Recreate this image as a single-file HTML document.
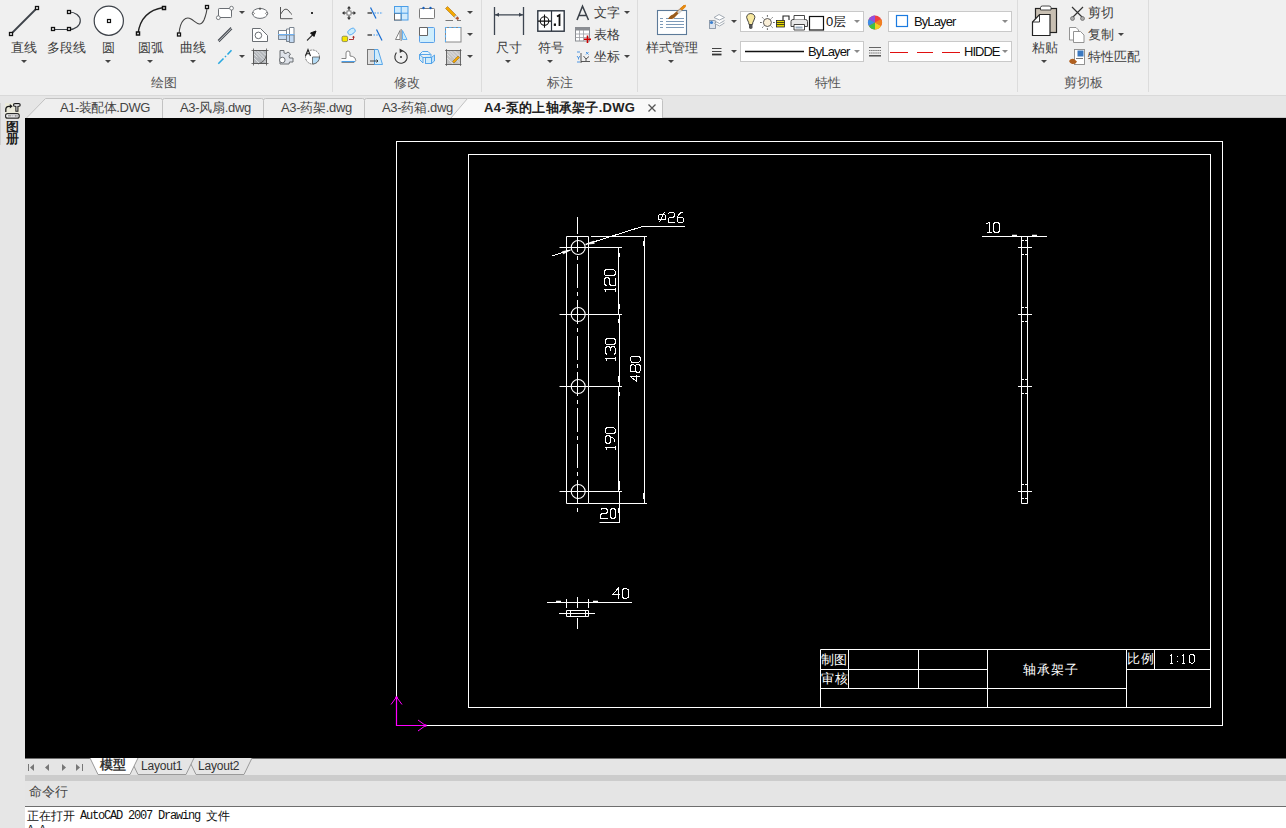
<!DOCTYPE html>
<html><head><meta charset="utf-8">
<style>
*{margin:0;padding:0;box-sizing:border-box}
html,body{width:1286px;height:828px;overflow:hidden;background:#e5e5e5;font-family:"Liberation Sans",sans-serif;position:relative}
.a{position:absolute}
.t{position:absolute;font-size:13px;line-height:13px;color:#3c3c3c;white-space:nowrap}
.lbl{position:absolute;font-size:13px;line-height:13px;color:#555;white-space:nowrap}
.sep{position:absolute;top:0;width:1px;height:92px;background:#dcdcdc}
.dd{position:absolute;width:0;height:0;border-left:3px solid transparent;border-right:3px solid transparent;border-top:3px solid #444}
.ddg{position:absolute;width:0;height:0;border-left:3.5px solid transparent;border-right:3.5px solid transparent;border-top:3.5px solid #8a8a8a}
svg{position:absolute;overflow:visible}
.tab{letter-spacing:-0.3px;color:#444}
.combo{position:absolute;background:#fff;border:1px solid #c9c9c9}
</style></head><body>
<!-- RIBBON -->
<div class="a" style="left:0;top:0;width:1286px;height:95px;background:#f0f0f0"></div>
<div class="a" style="left:0;top:95px;width:1286px;height:1px;background:#d9d9d9"></div>
<div class="sep" style="left:332px"></div>
<div class="sep" style="left:481px"></div>
<div class="sep" style="left:637px"></div>
<div class="sep" style="left:1017px"></div>
<div class="sep" style="left:1148px"></div>

<div class="lbl" style="left:151px;top:76px">绘图</div>
<div class="lbl" style="left:394px;top:76px">修改</div>
<div class="lbl" style="left:547px;top:76px">标注</div>
<div class="lbl" style="left:815px;top:76px">特性</div>
<div class="lbl" style="left:1064px;top:76px">剪切板</div>

<div class="t" style="left:11px;top:41px">直线</div>
<div class="t" style="left:47px;top:41px">多段线</div>
<div class="t" style="left:102px;top:41px">圆</div>
<div class="t" style="left:138px;top:41px">圆弧</div>
<div class="t" style="left:180px;top:41px">曲线</div>
<div class="t" style="left:496px;top:41px">尺寸</div>
<div class="t" style="left:538px;top:41px">符号</div>
<div class="t" style="left:594px;top:6px">文字</div>
<div class="t" style="left:594px;top:28px">表格</div>
<div class="t" style="left:594px;top:50px">坐标</div>
<div class="t" style="left:646px;top:41px">样式管理</div>
<div class="t" style="left:1032px;top:41px">粘贴</div>
<div class="t" style="left:1088px;top:6px">剪切</div>
<div class="t" style="left:1088px;top:28px">复制</div>
<div class="t" style="left:1088px;top:50px">特性匹配</div>

<div class="dd" style="left:21px;top:60px"></div>
<div class="dd" style="left:105px;top:60px"></div>
<div class="dd" style="left:147px;top:60px"></div>
<div class="dd" style="left:190px;top:60px"></div>
<div class="dd" style="left:505px;top:60px"></div>
<div class="dd" style="left:547px;top:60px"></div>
<div class="dd" style="left:668px;top:60px"></div>
<div class="dd" style="left:1041px;top:60px"></div>
<div class="dd" style="left:239px;top:11px"></div>
<div class="dd" style="left:239px;top:55px"></div>
<div class="dd" style="left:467px;top:11px"></div>
<div class="dd" style="left:467px;top:33px"></div>
<div class="dd" style="left:467px;top:55px"></div>
<div class="dd" style="left:624px;top:11px"></div>
<div class="dd" style="left:624px;top:55px"></div>
<div class="dd" style="left:731px;top:20px"></div>
<div class="dd" style="left:731px;top:50px"></div>
<div class="dd" style="left:1118px;top:33px"></div>

<!-- combos -->
<div class="combo" style="left:740px;top:11px;width:124px;height:21px"></div>
<div class="combo" style="left:740px;top:41px;width:124px;height:21px"></div>
<div class="combo" style="left:888px;top:11px;width:124px;height:21px"></div>
<div class="combo" style="left:888px;top:41px;width:124px;height:21px"></div>
<div class="t" style="left:826px;top:15px;color:#111">0层</div>
<div class="t" style="left:808px;top:45px;color:#111;letter-spacing:-0.9px">ByLayer</div>
<div class="t" style="left:914px;top:15px;color:#111;letter-spacing:-0.9px">ByLayer</div>
<div class="t" style="left:964px;top:45px;color:#111;letter-spacing:-1px">HIDDE</div>
<div class="ddg" style="left:854px;top:20px"></div>
<div class="ddg" style="left:854px;top:50px"></div>
<div class="ddg" style="left:1002px;top:20px"></div>
<div class="ddg" style="left:1002px;top:50px"></div>


<!-- RIBBON ICONS -->
<svg class="a" style="left:0;top:0" width="1286" height="96" viewBox="0 0 1286 96">
<g fill="none" stroke="#3d4249">
 <!-- line -->
 <line x1="11" y1="34" x2="37" y2="8" stroke-width="1.8"/>
 <rect x="9.5" y="32.5" width="3" height="3" fill="#fff" stroke="#111" stroke-width="1.3"/>
 <rect x="35.5" y="6.5" width="3" height="3" fill="#fff" stroke="#111" stroke-width="1.3"/>
 <!-- polyline -->
 <path d="M53 29.5 H69 M69 12 A11.3 8.75 0 0 1 69 29.5" stroke-width="1.2"/>
 <rect x="51.5" y="27.5" width="3" height="3" fill="#fff" stroke="#111" stroke-width="1.3"/>
 <rect x="67.5" y="27.5" width="3" height="3" fill="#fff" stroke="#111" stroke-width="1.3"/>
 <rect x="67.5" y="10.5" width="3" height="3" fill="#fff" stroke="#111" stroke-width="1.3"/>
 <!-- circle -->
 <circle cx="108.8" cy="20.7" r="14.6" fill="#fff" stroke-width="1.2"/>
 <rect x="107.5" y="19.5" width="3" height="3" fill="#fff" stroke="#111" stroke-width="1.2"/>
 <!-- arc -->
 <path d="M138 33.5 Q141 11 163.5 7.5" stroke-width="1.3" stroke="#222"/>
 <rect x="136.5" y="32" width="3" height="3" fill="#fff" stroke="#111" stroke-width="1.5"/>
 <rect x="162.5" y="6.5" width="3" height="3" fill="#fff" stroke="#111" stroke-width="1.5"/>
 <!-- spline -->
 <path d="M179 34 C180 20 186 16 191 19 C196 22 200 28 204 20 C206 15 207 10 207 7" stroke-width="1.1" stroke="#444"/>
 <rect x="177.5" y="33" width="3" height="3" fill="#fff" stroke="#111" stroke-width="1.3"/>
 <rect x="205.5" y="5.5" width="3" height="3" fill="#fff" stroke="#111" stroke-width="1.3"/>
 <!-- small draw icons -->
 <rect x="218.5" y="8.5" width="13" height="9" fill="#fff" stroke="#6a6e73" rx="0.8"/>
 <circle cx="231.5" cy="8.2" r="1.9" fill="#fff" stroke="#6a6e73" stroke-width="0.9"/>
 <circle cx="218.3" cy="17.7" r="1.9" fill="#fff" stroke="#6a6e73" stroke-width="0.9"/>
 <ellipse cx="260" cy="13.4" rx="7.6" ry="5" fill="#fff" stroke="#6a6e73"/>
 <rect x="259" y="7.8" width="2" height="1.8" fill="#555" stroke="none"/>
 <path d="M252.3 13.4 L253.4 12.3 L254.5 13.4 L253.4 14.5 Z M265.5 13.4 L266.6 12.3 L267.7 13.4 L266.6 14.5 Z" fill="#fff" stroke="#555" stroke-width="0.7"/>
 <path d="M280.5 7 V18.7 H292.5 M280.8 14 Q285 6 289 11 Q290.5 13.5 292 14.5" stroke="#555" stroke-width="1"/>
 <rect x="311" y="12" width="2" height="2" fill="#333" stroke="none"/>
 <path d="M218 40.5 L231 27.5 M219 41.8 L232 28.8" stroke="#4a4f56" stroke-width="1.1"/>
 <path d="M252.5 28.5 H260.5 L267.5 35.5 V41.5 H252.5 Z" fill="#fff" stroke="#6a6e73" stroke-linejoin="round"/>
 <circle cx="258.4" cy="35.4" r="3.3" stroke="#6a6e73"/>
 <path d="M278.5 30.5 H286.5 V39.5 H278.5 Z" fill="#fff" stroke="#7b8591"/>
 <path d="M278.5 35 H286.5 V39.5 H278.5 Z" fill="#c3daf3" stroke="#7b8591"/>
 <path d="M286.5 29 H289.5 V41.5 H286.5 Z M289.5 27.5 H294 V42.5 H289.5 Z" fill="#fff" stroke="#7b8591"/>
 <path d="M286.5 35 H289.5 V41.5 H286.5 Z M289.5 35 H294 V42.5 H289.5 Z" fill="#c3daf3" stroke="#7b8591"/>
 <line x1="278" y1="34.5" x2="294.5" y2="34.5" stroke="#6fb0f0"/>
 <line x1="307" y1="40.5" x2="313" y2="34.5" stroke="#333" stroke-width="1.1"/>
 <path d="M316 31 L310.5 33 L314 36.5 Z" fill="#111" stroke="#111"/>
 <path d="M218.3 63.7 L223.5 58.5 M225 57 L226 56 M227.5 54.5 L231.5 50.2" stroke="#29a8e0" stroke-width="1.6"/>
 <rect x="253.5" y="50.5" width="13" height="13" fill="#b3b6ba" stroke="#666"/>
 <path d="M254 54 L257.5 57.5 M254 58 L259.5 63.5 M257 50.5 L266 59.5 M261 50.5 L266 55.5 M254 50.5 L266 62.5" stroke="#e2e4e6" stroke-width="0.9"/>
 <path d="M258 64 Q265 62 266.5 55" stroke="#555" stroke-width="0.9"/>
 <path d="M251.5 50.5 H268.5 M251.5 63.5 H268.5 M253.5 48.5 V65.5 M266.5 48.5 V65.5" stroke="#555" stroke-width="0.8"/>
 <path d="M280 50.5 H284 V53 L286 53.5 L288 52 L290.5 54 L289 56 L289.5 58 H293 V62 H289.5 L289 64 H280 Z" fill="#dfe3ea" stroke="#6a6e73" stroke-width="1"/>
 <circle cx="282.3" cy="60" r="2.8" fill="#fff" stroke="#6a6e73"/>
 <circle cx="312.5" cy="57" r="7" fill="#fff" stroke="#555" stroke-dasharray="2 1" stroke-width="0.8"/>
 <path d="M312.5 57 H319.5 A7 7 0 0 1 312.5 64 Z" fill="#b5dcf5" stroke="#555" stroke-width="0.8"/>
 <path d="M305.5 56 L308 49.5 L310.5 56 M306.5 53.8 H309.5" stroke="#222" stroke-width="1.1"/>
</g>
<g fill="none">
 <!-- modify panel -->
 <rect x="347" y="11" width="4" height="4" fill="#fff" stroke="#666" stroke-width="0.8"/>
 <path d="M342 13 L344.5 11 V15 Z M356 13 L353.5 11 V15 Z M349 6 L347 8.5 H351 Z M349 20 L347 17.5 H351 Z" fill="#333"/>
 <path d="M344 13 H346.5 M351.5 13 H354 M349 8 V10.5 M349 15.5 V18" stroke="#333" stroke-width="1.2"/>
 <path d="M367.5 13 H372" stroke="#666" stroke-width="1.8"/>
 <path d="M370.5 7.5 L376 18.5" stroke="#1c6fd1" stroke-width="1.2"/>
 <path d="M374.5 13 H383" stroke="#6aaef0" stroke-width="1.5" stroke-dasharray="1.4 1.4"/>
 <rect x="394.5" y="6.5" width="13.5" height="13.5" fill="#cfeafc" stroke="#4a9ee8"/>
 <rect x="394.5" y="13.5" width="6.7" height="6.5" fill="#fff" stroke="#666"/>
 <path d="M401.2 6.5 V20 M394.5 13.2 H408" stroke="#4a9ee8"/>
 <rect x="419.5" y="8.5" width="15" height="10" fill="#fff" stroke="#7a7a7a" rx="0.8"/>
 <circle cx="423.5" cy="8" r="1.2" fill="#1560c0"/><circle cx="430.5" cy="8" r="1.2" fill="#1560c0"/>
 <path d="M445.5 8.5 L447.5 6.5 L456 15 L454 17 Z" fill="#f5a800" stroke="#a87010" stroke-width="0.6"/>
 <path d="M454 17 L456 15 L457.5 16.5 L455.5 18.5 Z" fill="#dedede" stroke="#999" stroke-width="0.5"/>
 <path d="M455.5 18.5 L457.5 16.5 L459 18 Q459 19.5 457.5 20 Z" fill="#b5522a"/>
 <path d="M445.5 20.5 H453 M457 20.5 H461" stroke="#777" stroke-width="1"/>
 <rect x="342" y="36.2" width="5.6" height="5.4" rx="1.4" fill="#f5e500" stroke="#6a6a40" stroke-width="0.7"/>
 <rect x="347.5" y="29" width="8" height="5" rx="2.5" transform="rotate(-35 351.5 31.5)" fill="#c9ecfc" stroke="#5aaaf0" stroke-width="0.9"/>
 <path d="M349 39.5 H353.5 V37" stroke="#a02020" stroke-width="0.9"/>
 <path d="M352 37.5 L353.5 35.8 L355 37.5 Z" fill="#a02020"/>
 <path d="M367.5 35 H372" stroke="#666" stroke-width="1.8"/>
 <path d="M373.5 35 H378" stroke="#6aaef0" stroke-width="1.5" stroke-dasharray="1.4 1.4"/>
 <path d="M376.5 29.5 L382 40.5" stroke="#1c6fd1" stroke-width="1.2"/>
 <path d="M400 30.5 L395.5 39.5 H400 Z" fill="#fff" stroke="#777" stroke-width="0.9"/>
 <path d="M402.5 30.5 L407 39.5 H402.5 Z" fill="#c9ecfc" stroke="#5aaaf0" stroke-width="0.9"/>
 <path d="M401.2 29 V41" stroke="#aaa" stroke-width="1.6"/>
 <rect x="419.5" y="27.5" width="15" height="15" fill="#cfeefd" stroke="#5aa0e8" rx="1"/>
 <path d="M419.5 35.5 V27.5 H427.5 V35.5 Z" fill="#fff" stroke="#666"/>
 <rect x="445.5" y="27.5" width="15.5" height="14.5" fill="#fff" stroke="#888"/>
 <path d="M445.5 42 V27.5 H461" stroke="#5ab0f5" stroke-dasharray="2.5 2" stroke-width="1.1"/>
 <path d="M341.5 58.5 H346 V53 Q346 51 348 51 Q350 51 350 53 V56 Q353 56 355 58 Q357 61 354 62.5 H341.5" fill="#fff" stroke="#777" stroke-width="0.9"/>
 <path d="M341.5 61.5 H355" stroke="#4a9ee8" stroke-width="1.1"/>
 <rect x="367.5" y="49.5" width="7" height="15" fill="#e0e0e0" stroke="#777"/>
 <path d="M374.5 49.5 H378 L382.5 64.5 H374.5 Z" fill="#d0ecfc" stroke="#4a9ee8" stroke-width="0.9"/>
 <path d="M370 61 H378 M376.5 59.5 L378 61 L376.5 62.5" stroke="#333" stroke-width="0.9"/>
 <circle cx="401" cy="57" r="6.2" stroke="#333" stroke-width="1.1" stroke-dasharray="30 6" transform="rotate(-60 401 57)"/>
 <path d="M399.5 48.5 L403.5 50.8 L399.8 53 Z" fill="#333"/>
 <circle cx="401" cy="57" r="1" fill="#333"/>
 <path d="M419.5 54.5 L422.5 51.5 H428 L431 54.5 Z" fill="#e6f5fd" stroke="#4a9ee8" stroke-width="0.9"/>
 <path d="M419.5 54.5 V59.5 L423 63 V57.5 Z M423 57.5 H431 V54.5" fill="#d0ecfc" stroke="#4a9ee8" stroke-width="0.9"/>
 <rect x="425.5" y="57.5" width="6" height="6" fill="#d0ecfc" stroke="#4a9ee8" stroke-width="0.9"/>
 <path d="M431.5 57.5 L434.5 55 V61 L431.5 63.5 Z" fill="#c0e2fa" stroke="#4a9ee8" stroke-width="0.9"/>
 <rect x="446.5" y="50.5" width="14" height="14" fill="#c4c4c4" stroke="#666" stroke-width="0.6"/>
 <path d="M447 54 L450.5 57.5 M447 58 L453 64 M450 50.5 L460 60.5 M454 50.5 L460 56.5 M447 50.5 L460 63.5" stroke="#e8e8e8" stroke-width="0.8"/>
 <path d="M452.5 61.5 L458 56 L459.5 57.5 L454 63 Z" fill="#f5a800" stroke="#8a6010" stroke-width="0.5"/>
 <path d="M445 50.5 H461.5 M445 64.5 H461.5 M446.5 49 V66 M460.5 49 V66" stroke="#555" stroke-width="0.7"/>
 <!-- annotate panel -->
 <path d="M494.5 7 V35 M523.5 7 V35 M495 14.8 H523" stroke="#3d4550" stroke-width="1.3"/>
 <path d="M495 14.8 L499 12.8 V16.8 Z M523 14.8 L519 12.8 V16.8 Z" fill="#3d4550"/>
 <rect x="537.8" y="10.8" width="26.4" height="20.4" fill="#fff" stroke="#2d3540" stroke-width="1.4"/>
 <path d="M551.5 10.8 V31.2" stroke="#2d3540" stroke-width="1.2"/>
 <circle cx="544.5" cy="21.1" r="4.3" stroke="#111" stroke-width="1.1"/>
 <path d="M538 21.1 H551 M544.5 14.5 V27.8" stroke="#111" stroke-width="1.1"/>
 <rect x="553.8" y="23.5" width="2.2" height="2.4" fill="#111"/>
 <path d="M557 16.5 L559.5 15 V26" stroke="#111" stroke-width="1.8"/>
 <path d="M577 20 L582.5 6.2 L588.5 20 M579 15.5 H586.5" stroke="#3a4048" stroke-width="1.5"/>
 <rect x="575.5" y="27.5" width="14" height="13.5" fill="#fff" stroke="#8a8d92"/>
 <rect x="575.5" y="27.5" width="14" height="3" fill="#8a8d92"/>
 <path d="M575.5 34 H589.5 M575.5 37.5 H589.5 M579.5 30 V41 M583.5 30 V41" stroke="#9a9da2" stroke-width="0.8"/>
 <path d="M587.5 35.5 V43 M584 39.3 H591" stroke="#c00" stroke-width="1.6"/>
 <path d="M581 53 V63 M581 61.5 H590 M583.5 56 L586 59 L589 56.5 M586 59 V61" stroke="#444" stroke-width="0.9"/>
 <path d="M577 52 H580 M586 52 L588.5 54.5 M588.5 52 L586 54.5 M577 56 L578.5 58 L580 56 M578.5 58 V59.5 M577 62 H580" stroke="#3a8be0" stroke-width="0.9"/>
 <!-- properties panel -->
 <rect x="657.5" y="10.5" width="29" height="24" fill="#fff" stroke="#5c7a99" stroke-width="1.1"/>
 <path d="M660 18.5 H663 M660 21.5 H663 M660 24.5 H663 M660 27.5 H663 M666 21.5 H684 M666 24.5 H684 M666 27.5 H684 M666 18.5 H670 M674 18.5 H684" stroke="#6e8fb0" stroke-width="0.9"/>
 <path d="M668 19 Q670 15 673 14.5 L684 5 Q686 4.5 685.5 6.5 L675.5 16.5 Q674 19.5 668 19 Z" fill="#9a5c1c"/>
 <path d="M684 5 L686 4.8 L685.6 7 L682 10.5 L680 8.5 Z" fill="#e88a10"/>
 <path d="M677 12 L680 9 L682 11 L679 14 Z" fill="#d0d0d0"/>
 <rect x="709.5" y="20.5" width="6" height="8" fill="#dde4ee" stroke="#8895a5" stroke-width="0.9"/>
 <circle cx="711.5" cy="22.5" r="1.6" fill="#3a7fd0"/>
 <path d="M714 17.5 L719 14.5 L724.5 17.5 L719.5 20 Z M714 20.5 L719.5 23.5 L724.5 20.5 M714 23 L719.5 26 L724.5 23" fill="#fff" stroke="#9aa3ad" stroke-width="0.9"/>
 <path d="M712 48.5 H721.5 M712 51.5 H721.5" stroke="#444" stroke-width="1.1"/>
 <path d="M712 54.5 H721.5" stroke="#333" stroke-width="1.8"/>
 <path d="M747.5 20 Q746 17 747 15.5 Q748.5 13.5 750.8 13.5 Q753 13.5 754.5 15.5 Q755.5 17 754 20 Q752.5 22.5 752.5 24.5 H749 Q749 22.5 747.5 20 Z" fill="#f8e9a0" stroke="#333" stroke-width="0.9"/>
 <path d="M749 25 H752.5 V28 Q750.8 30 749 28 Z" fill="#555"/>
 <circle cx="767.4" cy="22.5" r="4" fill="#fbf0d8" stroke="#444" stroke-width="0.9"/>
 <path d="M767.4 15 V16.8 M767.4 28.2 V30 M760 22.5 H761.8 M773 22.5 H774.8 M762.2 17.3 L763.4 18.5 M771.4 26.5 L772.6 27.7 M762.2 27.7 L763.4 26.5 M771.4 18.5 L772.6 17.3" stroke="#555" stroke-width="0.9"/>
 <rect x="776.5" y="20.5" width="8" height="6.5" fill="#e5d800" stroke="#222" stroke-width="0.8"/>
 <path d="M776.5 22.5 H784.5 M776.5 24.5 H784.5" stroke="#222" stroke-width="0.8"/>
 <path d="M783 20.5 V16 H789 V20" stroke="#222" stroke-width="1.1"/>
 <path d="M793 19.5 H805.5 Q807.5 19.5 807.5 21.5 V26.5 H791 V21.5 Q791 19.5 793 19.5 Z" fill="#e8e8e8" stroke="#333" stroke-width="0.9"/>
 <path d="M794 19.5 V15.5 H804.5 V19.5 M794 24.5 H804.5 V30 H794 Z" fill="#fff" stroke="#333" stroke-width="0.9"/>
 <rect x="795.5" y="26.5" width="7" height="2" fill="#9ab"/>
 <rect x="809.5" y="16.5" width="14" height="13.5" fill="#fff" stroke="#111" stroke-width="1.2"/>
 <circle cx="875" cy="22.5" r="7" fill="#f04040"/>
 <path d="M875 22.5 L875 15.5 A7 7 0 0 0 868.9 19 Z" fill="#9050e0"/>
 <path d="M875 22.5 L868.9 19 A7 7 0 0 0 868.9 26 Z" fill="#3a8ee8"/>
 <path d="M875 22.5 L868.9 26 A7 7 0 0 0 875 29.5 Z" fill="#40c040"/>
 <path d="M875 22.5 L875 29.5 A7 7 0 0 0 881.1 26 Z" fill="#f0d020"/>
 <path d="M875 22.5 L881.1 26 A7 7 0 0 0 881.1 19 Z" fill="#f08020"/>
 <path d="M745 51.5 H804" stroke="#111" stroke-width="1.3"/>
 <path d="M869 47.5 H881" stroke="#555" stroke-width="0.9"/><path d="M869 50.5 H881 M869 53 H881" stroke="#666" stroke-width="0.9" stroke-dasharray="1.5 0.6"/><path d="M869 55.8 H881" stroke="#444" stroke-width="1.4"/>
 <rect x="896.5" y="15.5" width="11" height="11" stroke="#1a7ae0" stroke-width="1.2"/>
 <path d="M890 52.5 H908 M917 52.5 H933 M942 52.5 H960" stroke="#e01010" stroke-width="1.1"/>
 <!-- clipboard -->
 <rect x="1035.5" y="8.5" width="21" height="24" fill="#c8bfb2" stroke="#222" stroke-width="1.2"/>
 <path d="M1040.5 10 V7.5 Q1040.5 6 1042.5 6 H1049 Q1051 6 1051 7.5 V10 Z" fill="#fff" stroke="#333" stroke-width="0.9"/>
 <path d="M1032.5 35.5 V22 L1039.5 14.5 H1050 V35.5 Z" fill="#fff" stroke="#222" stroke-width="1.2"/>
 <path d="M1032.5 22 H1039.5 V14.5" fill="none" stroke="#222" stroke-width="0.9"/>
 <path d="M1072 7 L1083 18 M1083 7 L1072 18" stroke="#333" stroke-width="1.2"/>
 <circle cx="1072.5" cy="18.5" r="2" fill="#aaa" stroke="#555" stroke-width="0.6"/>
 <circle cx="1082.5" cy="18.5" r="2" fill="#aaa" stroke="#555" stroke-width="0.6"/>
 <path d="M1069.5 40 V27.5 H1076 L1078.5 30 V40 Z" fill="#fff" stroke="#888" stroke-width="0.9"/>
 <path d="M1073.5 42.5 V31.5 H1080.5 L1084 35 V42.5 Z" fill="#fff" stroke="#888" stroke-width="0.9"/>
 <rect x="1074.5" y="49.5" width="10" height="15" fill="#fff" stroke="#888" stroke-width="0.9"/>
 <rect x="1077.5" y="50.5" width="6" height="6" fill="#3a78c0"/>
 <path d="M1076 58.5 H1083" stroke="#555" stroke-width="0.8"/>
 <path d="M1069 61 Q1071 58 1074 59 L1077 61.5 Q1076 64.5 1072 64 Q1069.5 63 1069 61 Z" fill="#b06020"/>
</g>
</svg>

<!-- TAB STRIP -->
<div class="a" style="left:0;top:96px;width:1286px;height:22px;background:#e6e6e6"></div>

<!-- LEFT STRIP -->
<div class="a" style="left:0;top:96px;width:25px;height:732px;background:#e6e6e6"></div>
<svg class="a" style="left:0;top:96px" width="1286" height="22" viewBox="0 96 1286 22">
<g stroke="#c2c2c2" stroke-width="1">
<path d="M26 118.5 L45.5 98.5 H160.5 Q162.5 98.5 162.5 100.5 V118.5" fill="#efefef"/>
<path d="M162.5 118.5 V100.5 Q162.5 98.5 164.5 98.5 H261.5 Q263.5 98.5 263.5 100.5 V118.5" fill="#efefef"/>
<path d="M263.5 118.5 V100.5 Q263.5 98.5 265.5 98.5 H362.5 Q364.5 98.5 364.5 100.5 V118.5" fill="#efefef"/>
<path d="M364.5 118.5 V100.5 Q364.5 98.5 366.5 98.5 H470 V118.5" fill="#efefef"/>
<path d="M450.5 118.5 L467.5 98.5 H660.5 Q662.5 98.5 662.5 100.5 V118.5" fill="#f9f9f9"/>
</g>
<path d="M648.5 104.5 L655.5 111.5 M655.5 104.5 L648.5 111.5" stroke="#555" stroke-width="1.3"/>
</svg>
<div class="t tab" style="left:60px;top:101px;letter-spacing:-0.48px">A1-装配体.DWG</div>
<div class="t tab" style="left:180px;top:101px">A3-风扇.dwg</div>
<div class="t tab" style="left:281px;top:101px">A3-药架.dwg</div>
<div class="t tab" style="left:382px;top:101px">A3-药箱.dwg</div>
<div class="t tab" style="left:484px;top:101px;font-weight:bold;color:#222;letter-spacing:0.27px">A4-泵的上轴承架子.DWG</div>

<div class="a" style="left:0;top:103px;width:1px;height:42px;background:#cfcfcf"></div>
<div class="a" style="left:5px;top:103px;width:15px;height:16px;background:#ebeada"></div>
<svg class="a" style="left:0;top:96px" width="25" height="30" viewBox="0 96 25 30">
<path d="M5.8 112 V109.5 Q5.8 106.3 9 106.3 H10" fill="none" stroke="#1a1a1a" stroke-width="1.3"/>
<path d="M9.8 104 L12.6 106.3 L9.8 108.6 Z" fill="#1a1a1a"/>
<path d="M13.5 105 Q13.5 103.6 15 103.6 H18.8 Q20.2 103.6 20.2 105 Q20.2 106.3 18.8 106.3 H17.9 V111.2 H15.9 V106.3 H15 Q13.5 106.3 13.5 105 Z" fill="#fff" stroke="#1a1a1a" stroke-width="1.1"/>
<rect x="5.6" y="113.6" width="13.6" height="4.6" rx="2" fill="#fff" stroke="#2a2a2a" stroke-width="1.2"/>
<path d="M7.8 115.9 H11.5 M12.3 115.9 H13.5 M15.2 115 V116.8 M17 115 V116.8" stroke="#444" stroke-width="0.8"/>
</svg>
<div class="a" style="left:5.5px;top:120.5px;width:14px;height:25px;overflow:hidden;font-size:12.5px;line-height:12px;color:#1e1e1e;font-weight:bold">图<br>册</div>


<!-- CANVAS -->
<div class="a" style="left:25px;top:118px;width:1261px;height:640px;background:#000"></div>

<svg class="a" style="left:0;top:0" width="1286" height="828" viewBox="0 0 1286 828">
<defs><clipPath id="cv"><rect x="25" y="118" width="1261" height="640"/></clipPath></defs>
<g clip-path="url(#cv)" fill="none" stroke="#fff" stroke-width="1">
<rect x="396.5" y="141.5" width="826" height="584"/>
<rect x="468.5" y="154.5" width="742" height="553"/>
<path d="M820.5 649.5 H1210.5 M820.5 669.5 H987.5 M1126.5 669.5 H1210.5 M820.5 688.5 H1126.5 M820.5 649.5 V707.5 M848.5 649.5 V688.5 M918.5 649.5 V688.5 M987.5 649.5 V707.5 M1126.5 649.5 V707.5 M1154.5 649.5 V669.5"/>
<path d="M566.5 236.5 H588.5 V503.5 H566.5 Z"/>
<circle cx="578.2" cy="247.5" r="7" stroke-width="1.1"/>
<path d="M559.5 247.5 H622"/>
<circle cx="578.2" cy="314.5" r="7" stroke-width="1.1"/>
<path d="M559.5 314.5 H622"/>
<circle cx="578.2" cy="386.5" r="7" stroke-width="1.1"/>
<path d="M559.5 386.5 H622"/>
<circle cx="578.2" cy="491.5" r="7" stroke-width="1.1"/>
<path d="M559.5 491.5 H622"/>
<path d="M577.5 237 V514" stroke-dasharray="24 4 4 4" stroke-dashoffset="9"/>
<path d="M577.5 217 V234"/>
<path d="M591 236.5 H647 M644.5 236.5 V503.5 M588.5 503.5 H647"/>
<path d="M618.5 247 V314 M619.5 314 V386 M618.5 386 V491 M619.5 491 V523 M599.5 522.5 H620"/>
<path d="M643.5 241 V246"/>
<path d="M643.5 493 V499"/>
<path d="M619.5 253 V257"/>
<path d="M619.5 304 V309"/>
<path d="M618.5 319 V323"/>
<path d="M618.5 376 V382"/>
<path d="M619.5 392 V396"/>
<path d="M619.5 481 V490"/>
<path d="M618.5 508 V513"/>
<path d="M552 256 L570 250 M586 244.3 L642.5 226.5 H685" shape-rendering="crispEdges"/>
<path d="M570.5 250 L562.5 251.6 L563.3 253.8 Z" fill="#fff" stroke-width="0.8"/>
<path d="M585.5 244.3 L593.5 241.2 L594.3 243.4 Z" fill="#fff" stroke-width="0.8"/>
<path d="M1021.5 236.5 H1027.5 V503.5 H1021.5 Z M982 236.5 H1047"/>
<path d="M1012 235.5 H1017 M1032 235.5 H1037" stroke-width="1.6"/>
<path d="M1018 247.5 H1032"/>
<path d="M1021.5 240.5 H1024 M1025 240.5 H1027.5"/>
<path d="M1021.5 254.5 H1024 M1025 254.5 H1027.5"/>
<path d="M1018 314.5 H1032"/>
<path d="M1021.5 307.5 H1024 M1025 307.5 H1027.5"/>
<path d="M1021.5 321.5 H1024 M1025 321.5 H1027.5"/>
<path d="M1018 386.5 H1032"/>
<path d="M1021.5 379.5 H1024 M1025 379.5 H1027.5"/>
<path d="M1021.5 393.5 H1024 M1025 393.5 H1027.5"/>
<path d="M1018 491.5 H1032"/>
<path d="M1021.5 484.5 H1024 M1025 484.5 H1027.5"/>
<path d="M1021.5 498.5 H1024 M1025 498.5 H1027.5"/>
<path d="M547 602.5 H632 M566.5 599 V608 M577.5 597 V608 M588.5 599 V608"/>
<path d="M556 601.5 H561 M593 601.5 H598" stroke-width="1.6"/>
<path d="M566.5 610.5 H588.5 V616.5 H566.5 Z M570.5 610.5 V616.5 M585.5 610.5 V616.5 M559 613.5 H595 M577.5 618 V629"/>
<g shape-rendering="crispEdges"><path transform="translate(658.2,212.2) scale(1,0.9454545454545454)" d="M1.2,2.5 H6.2 L7.4,3.5 V7 L6.2,8 H1.2 L0,7 V3.5 Z M1.1,10.6 L6.4,0" vector-effect="non-scaling-stroke"/>
<path transform="translate(668.2,212.2) scale(1,0.9454545454545454)" d="M0,2 L1.5,0 H4.9 L6.4,1.5 V4 L4.9,5.5 H1.5 L0,7 V11 H6.4" vector-effect="non-scaling-stroke"/>
<path transform="translate(677.2,212.2) scale(1,0.9454545454545454)" d="M5.7,0 H4.2 L1,3.5 L0,5.5 V9.5 L1.5,11 H5.2 L6.7,9.5 V7 L5.2,5.5 H0.5" vector-effect="non-scaling-stroke"/>
<path transform="translate(604.5,291.5) rotate(-90) translate(0,0) scale(1,0.9545454545454546)" d="M0,1.5 L2.0,0 V11 M0,11 H4" vector-effect="non-scaling-stroke"/>
<path transform="translate(604.5,291.5) rotate(-90) translate(5.8,0) scale(1,0.9545454545454546)" d="M0,2 L1.5,0 H6.5 L8,1.5 V4 L6.5,5.5 H1.5 L0,7 V11 H8" vector-effect="non-scaling-stroke"/>
<path transform="translate(604.5,291.5) rotate(-90) translate(15.600000000000001,0) scale(1,0.9545454545454546)" d="M1.5,0 H4.8 L6.3,1.5 V9.5 L4.8,11 H1.5 L0,9.5 V1.5 Z" vector-effect="non-scaling-stroke"/>
<path transform="translate(605.5,360.5) rotate(-90) translate(0,0) scale(1,0.890909090909091)" d="M0,1.5 L2.0,0 V11 M0,11 H4" vector-effect="non-scaling-stroke"/>
<path transform="translate(605.5,360.5) rotate(-90) translate(5.9,0) scale(1,0.890909090909091)" d="M0,1.5 L1.5,0 H6.5 L8,1.5 V4 L6.5,5.5 H4.0 M6.5,5.5 L8,7 V9.5 L6.5,11 H1.5 L0,9.5" vector-effect="non-scaling-stroke"/>
<path transform="translate(605.5,360.5) rotate(-90) translate(15.8,0) scale(1,0.890909090909091)" d="M1.5,0 H4.8 L6.3,1.5 V9.5 L4.8,11 H1.5 L0,9.5 V1.5 Z" vector-effect="non-scaling-stroke"/>
<path transform="translate(605.5,449.5) rotate(-90) translate(0,0) scale(1,0.890909090909091)" d="M0,1.5 L2.0,0 V11 M0,11 H4" vector-effect="non-scaling-stroke"/>
<path transform="translate(605.5,449.5) rotate(-90) translate(5.9,0) scale(1,0.890909090909091)" d="M1.5,0 H6.5 L8,1.5 V4 L6.5,5.5 H1.5 L0,4 V1.5 Z M8,4 L4.5,10 H2" vector-effect="non-scaling-stroke"/>
<path transform="translate(605.5,449.5) rotate(-90) translate(15.8,0) scale(1,0.890909090909091)" d="M1.5,0 H4.5 L6,1.5 V9.5 L4.5,11 H1.5 L0,9.5 V1.5 Z" vector-effect="non-scaling-stroke"/>
<path transform="translate(630.5,381.5) rotate(-90) translate(0,0) scale(1,0.890909090909091)" d="M4.9,11 V0 L0,7 H6.9" vector-effect="non-scaling-stroke"/>
<path transform="translate(630.5,381.5) rotate(-90) translate(9.100000000000001,0) scale(1,0.890909090909091)" d="M1.5,0 H6.5 L7.5,1.2 V4 L6.5,5.5 H1.5 L0.5,4 V1.2 Z M1.5,5.5 L0,7 V9.5 L1.5,11 H6.5 L8,9.5 V7 L6.5,5.5" vector-effect="non-scaling-stroke"/>
<path transform="translate(630.5,381.5) rotate(-90) translate(19.3,0) scale(1,0.890909090909091)" d="M1.5,0 H4.5 L6,1.5 V9.5 L4.5,11 H1.5 L0,9.5 V1.5 Z" vector-effect="non-scaling-stroke"/>
<path transform="translate(600.5,508.5) scale(1,0.9090909090909091)" d="M0,2 L1.5,0 H5.5 L7,1.5 V4 L5.5,5.5 H1.5 L0,7 V11 H7" vector-effect="non-scaling-stroke"/>
<path transform="translate(610.5,508.5) scale(1,0.9090909090909091)" d="M1.5,0 H3.5 L5,1.5 V9.5 L3.5,11 H1.5 L0,9.5 V1.5 Z" vector-effect="non-scaling-stroke"/>
<path transform="translate(986.5,222.5) scale(1,0.9090909090909091)" d="M0,1.5 L2.5,0 V11 M0,11 H5" vector-effect="non-scaling-stroke"/>
<path transform="translate(993.5,222.5) scale(1,0.9090909090909091)" d="M1.5,0 H4.5 L6,1.5 V9.5 L4.5,11 H1.5 L0,9.5 V1.5 Z" vector-effect="non-scaling-stroke"/>
<path transform="translate(612.5,588.5) scale(1,0.9090909090909091)" d="M5.5,11 V0 L0,7 H7.5" vector-effect="non-scaling-stroke"/>
<path transform="translate(622.5,588.5) scale(1,0.9090909090909091)" d="M1.5,0 H4.2 L5.7,1.5 V9.5 L4.2,11 H1.5 L0,9.5 V1.5 Z" vector-effect="non-scaling-stroke"/>
<path transform="translate(1170,654.5) scale(1,0.7727272727272727)" d="M0,1.5 L1.5,0 V11 M0,11 H3" vector-effect="non-scaling-stroke"/>
<path transform="translate(1177.2,654.5) scale(1,0.7727272727272727)" d="M0,3 h0.8 M0,8.5 h0.8" vector-effect="non-scaling-stroke"/>
<path transform="translate(1182.2,654.5) scale(1,0.7727272727272727)" d="M0,1.5 L1.5,0 V11 M0,11 H3" vector-effect="non-scaling-stroke"/>
<path transform="translate(1189.4,654.5) scale(1,0.7727272727272727)" d="M1.5,0 H3.5 L5,1.5 V9.5 L3.5,11 H1.5 L0,9.5 V1.5 Z" vector-effect="non-scaling-stroke"/></g>
<g stroke="#ff00ff" stroke-width="1.2"><path d="M396.5 697 V725.5 H426"/><path d="M391 704.5 L396.5 697 L402 704.5 M418 720 L425.5 725.5 L418 731" stroke-width="1"/><circle cx="396.5" cy="697.5" r="1.2" fill="#ff00ff" stroke="none"/><circle cx="425.5" cy="725.5" r="1.2" fill="#ff00ff" stroke="none"/></g>
</g></svg>

<div class="t" style="left:821px;top:653.5px;color:#fff;font-size:12.5px">制图</div>
<div class="t" style="left:821px;top:673px;color:#fff;font-size:12.5px;letter-spacing:1px">审核</div>
<div class="t" style="left:1022.5px;top:663.5px;color:#fff;font-size:12.5px;letter-spacing:1px">轴承架子</div>
<div class="t" style="left:1127px;top:653px;color:#fff;font-size:12.5px;letter-spacing:1px">比例</div>

<!-- BOTTOM -->
<div class="a" style="left:25px;top:758px;width:1261px;height:1px;background:#6e6e6e"></div>
<div class="a" style="left:663px;top:117px;width:623px;height:1px;background:#c8c8c8"></div>
<svg class="a" style="left:0;top:758px" width="400" height="18" viewBox="0 758 400 18">
<g fill="#777">
<path d="M28.5 764 V771" stroke="#777" stroke-width="1"/><path d="M34 764 L30 767.5 L34 771 Z"/>
<path d="M49 764 L45 767.5 L49 771 Z"/>
<path d="M62 764 L66 767.5 L62 771 Z"/>
<path d="M76 764 L80 767.5 L76 771 Z"/><path d="M82.5 764 V771" stroke="#777" stroke-width="1"/>
</g>
<g stroke="#9a9a9a" stroke-width="1" fill="#e5e5e5">
<path d="M188 758 L196 774.5 H244 L252 758"/>
<path d="M130 758 L138 774.5 H186 L194 758"/>
<path d="M90 758 L98 774.5 H130 L138 758" fill="#fff"/>
</g>
</svg>
<div class="t" style="left:99.5px;top:759px;font-weight:bold;color:#333;font-size:12.5px;line-height:12px;letter-spacing:0.5px">模型</div>
<div class="t" style="left:141px;top:760px;font-size:12px;color:#333;letter-spacing:-0.2px">Layout1</div>
<div class="t" style="left:198px;top:760px;font-size:12px;color:#333;letter-spacing:-0.2px">Layout2</div>

<div class="a" style="left:25px;top:775px;width:1261px;height:6px;background:#cccccc"></div>
<div class="t" style="left:29px;top:785px;color:#444">命令行</div>
<div class="a" style="left:25px;top:806px;width:1261px;height:22px;background:#fff;border-top:1px solid #6e6e6e"></div>

<div class="t" style="left:27px;top:810px;color:#111;font-size:12px;line-height:12px">正在打开</div>
<div class="t" style="left:80px;top:810px;color:#111;font-size:12px;line-height:12px;font-family:'Liberation Mono',monospace;letter-spacing:-1.2px">AutoCAD 2007 Drawing</div>
<div class="t" style="left:206px;top:810px;color:#111;font-size:12px;line-height:12px">文件</div>
<div class="t" style="left:27px;top:825px;color:#111;font-size:12px;line-height:12px;font-family:'Liberation Mono',monospace;letter-spacing:-1.2px">^ ^</div>
</body></html>
